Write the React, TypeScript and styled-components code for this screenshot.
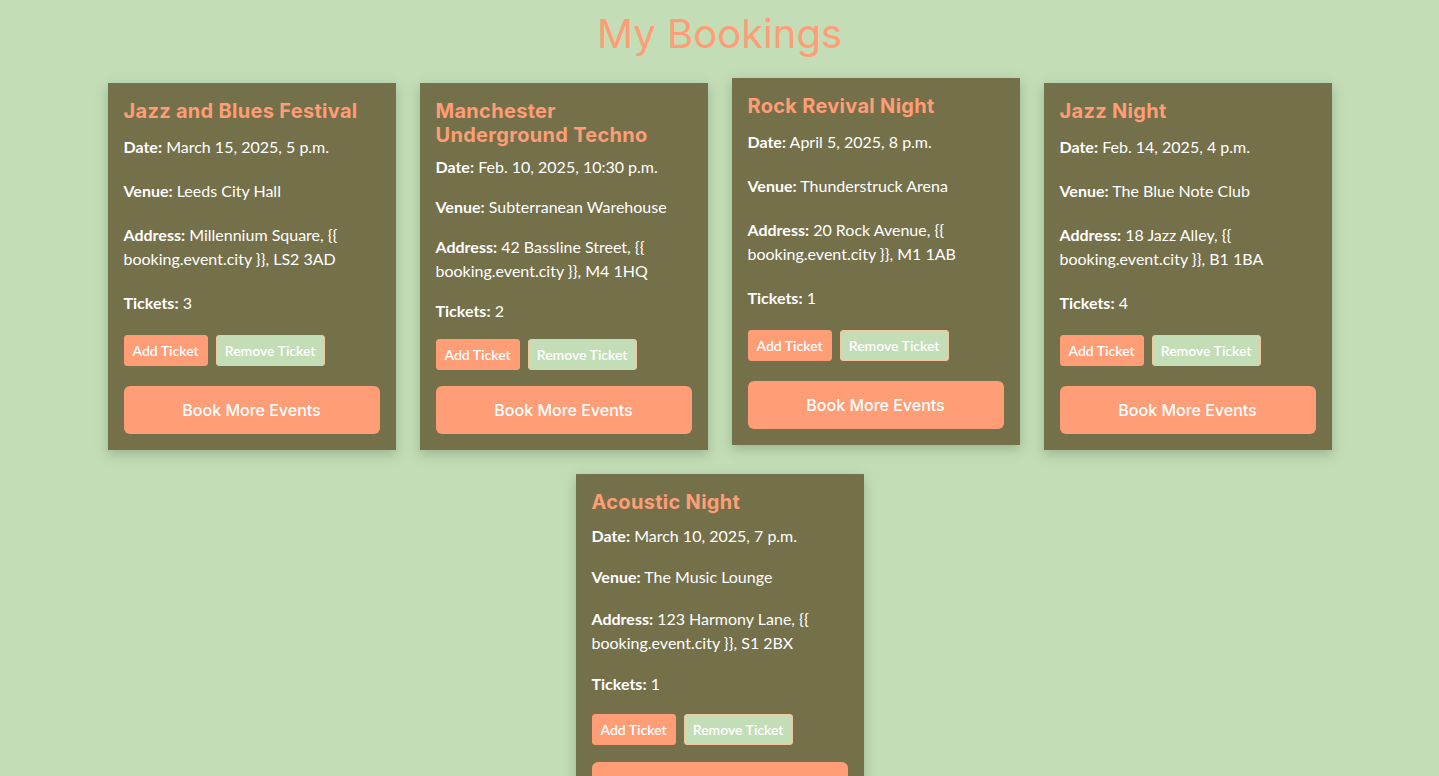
import React from "react";
import styled, { createGlobalStyle } from "styled-components";

const GlobalStyle = createGlobalStyle`
  html, body {
    margin: 0;
    padding: 0;
    background: #c3deb7;
  }
  body {
    font-family: Lato, "Liberation Sans", sans-serif;
    color: #ffffff;
  }
`;

const SALMON = "#ff9d76";
const CARD = "#747049";
const HEAD_FONT = `Inter, "Open Sans", sans-serif`;

const Page = styled.main`
  min-height: 776px;
  background: #c3deb7;
  padding: 10px 0 40px;
  box-sizing: border-box;
`;

const Heading = styled.h1`
  margin: 0 0 25px;
  text-align: center;
  font-family: ${HEAD_FONT};
  font-weight: 400;
  font-size: 40px;
  line-height: 48px;
  color: ${SALMON};
`;

const CardList = styled.section`
  display: flex;
  flex-wrap: wrap;
  justify-content: center;
  align-items: stretch;
  gap: 24px;
`;

const Card = styled.article<{ $lifted?: boolean }>`
  width: 288px;
  min-height: 352px;
  box-sizing: border-box;
  padding: 16px;
  background: ${CARD};
  display: flex;
  flex-direction: column;
  justify-content: space-between;
  box-shadow: 0 4px 12px rgba(60, 80, 40, 0.3);
  transform: ${(p) => (p.$lifted ? "translateY(-5px)" : "none")};
`;

const Title = styled.h2`
  margin: 0 0 8px;
  font-family: ${HEAD_FONT};
  font-weight: 700;
  font-size: 20px;
  letter-spacing: 0.3px;
  line-height: 24px;
  color: ${SALMON};
`;

const Info = styled.p`
  margin: 0 0 16px;
  font-size: 16px;
  line-height: 24px;
`;

const Label = styled.strong`
  font-weight: 700;
`;

const TicketActions = styled.div`
  display: flex;
  gap: 8px;
  margin-bottom: 16px;
`;

const SmallButton = styled.button<{ $variant: "add" | "remove" }>`
  height: 31px;
  padding: 0 8px;
  border-radius: 3px;
  font-family: Lato, sans-serif;
  font-size: 14px;
  font-weight: 600;
  color: #ffffff;
  cursor: pointer;
  background: ${(p) => (p.$variant === "add" ? SALMON : "#c3deb7")};
  border: 1px solid ${(p) => (p.$variant === "add" ? SALMON : "#f3c79c")};
`;

const BookButton = styled.button`
  width: 100%;
  height: 48px;
  border: none;
  border-radius: 6px;
  background: ${SALMON};
  color: #ffffff;
  font-family: ${HEAD_FONT};
  font-weight: 500;
  font-size: 16px;
  cursor: pointer;
`;

type Booking = {
  title: string;
  date: string;
  venue: string;
  street: string;
  postcode: string;
  tickets: number;
  lifted?: boolean;
};

const bookings: Booking[] = [
  { title: "Jazz and Blues Festival", date: "March 15, 2025, 5 p.m.", venue: "Leeds City Hall", street: "Millennium Square", postcode: "LS2 3AD", tickets: 3 },
  { title: "Manchester Underground Techno", date: "Feb. 10, 2025, 10:30 p.m.", venue: "Subterranean Warehouse", street: "42 Bassline Street", postcode: "M4 1HQ", tickets: 2 },
  { title: "Rock Revival Night", date: "April 5, 2025, 8 p.m.", venue: "Thunderstruck Arena", street: "20 Rock Avenue", postcode: "M1 1AB", tickets: 1, lifted: true },
  { title: "Jazz Night", date: "Feb. 14, 2025, 4 p.m.", venue: "The Blue Note Club", street: "18 Jazz Alley", postcode: "B1 1BA", tickets: 4 },
  { title: "Acoustic Night", date: "March 10, 2025, 7 p.m.", venue: "The Music Lounge", street: "123 Harmony Lane", postcode: "S1 2BX", tickets: 1 },
];

export default function App() {
  return (
    <>
      <GlobalStyle />
      <Page>
        <Heading>My Bookings</Heading>
        <CardList>
          {bookings.map((b) => (
            <Card key={b.title} $lifted={b.lifted}>
              <Title>{b.title}</Title>
              <Info>
                <Label>Date:</Label> {b.date}
              </Info>
              <Info>
                <Label>Venue:</Label> {b.venue}
              </Info>
              <Info>
                <Label>Address:</Label> {b.street}, {"{{ booking.event.city }}"}, {b.postcode}
              </Info>
              <Info>
                <Label>Tickets:</Label> {b.tickets}
              </Info>
              <TicketActions>
                <SmallButton $variant="add">Add Ticket</SmallButton>
                <SmallButton $variant="remove">Remove Ticket</SmallButton>
              </TicketActions>
              <BookButton>Book More Events</BookButton>
            </Card>
          ))}
        </CardList>
      </Page>
    </>
  );
}
